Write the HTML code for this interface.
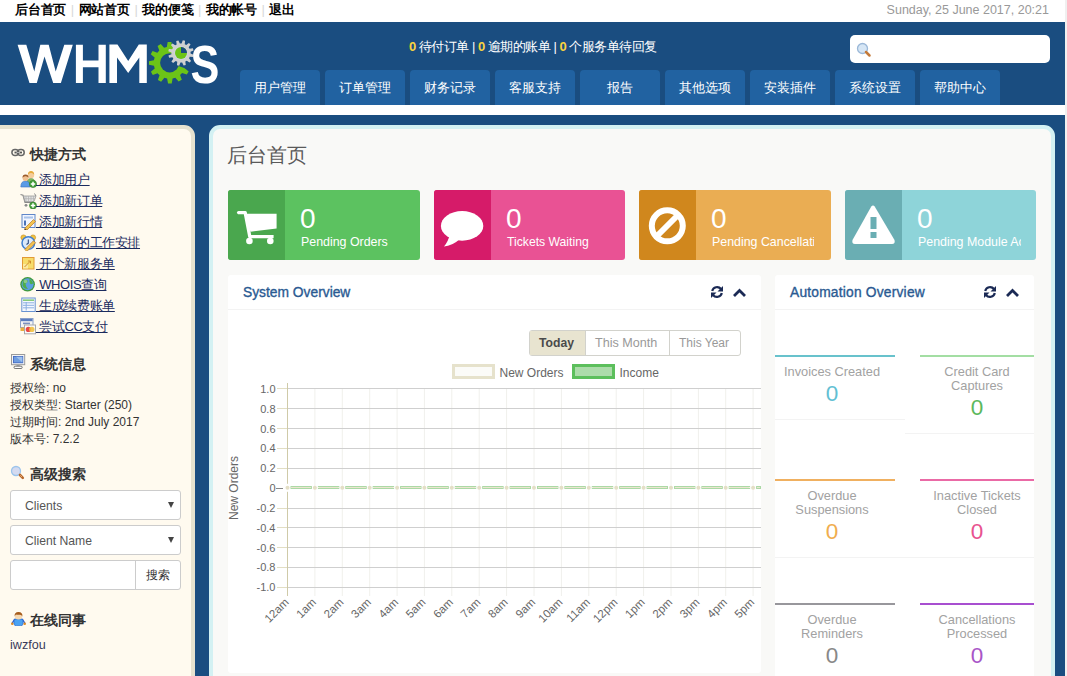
<!DOCTYPE html>
<html><head><meta charset="utf-8">
<style>
*{box-sizing:border-box}
html,body{margin:0;padding:0}
body{width:1067px;height:676px;overflow:hidden;position:relative;background:#f4f4f4;font-family:"Liberation Sans",sans-serif;color:#333}
.abs{position:absolute}
#topbar{left:0;top:0;width:1065px;height:22px;background:#fff}
#topnav{left:15px;top:1px;font-size:13px;font-weight:bold;color:#000;white-space:nowrap;line-height:18px;letter-spacing:-0.2px}
#topnav span.sep{color:#d8d8d8;font-weight:normal;margin:0 4.6px}
#date{right:18px;top:2px;font-size:12.5px;color:#999;line-height:16px}
#header{left:0;top:22px;width:1065px;height:83px;background:#1a4d80}
#strip{left:0;top:105px;width:1065px;height:10px;background:#fff}
#bodybg{left:0;top:115px;width:1065px;height:561px;background:#1a4d80}
#rstrip{left:1065px;top:0;width:2px;height:676px;background:#f0f0f0}
.tab{top:70px;width:80px;height:35px;background:#2162a1;border-radius:4px 4px 0 0;color:#fff;font-size:13px;text-align:center;line-height:35px}
#stats{left:409px;top:39px;font-size:13px;letter-spacing:-0.5px;color:#fff;white-space:nowrap;line-height:16px}
#stats b{color:#f9d33f}
#search{left:850px;top:35px;width:200px;height:28px;background:#fff;border-radius:5px}
#sidebar{left:-10px;top:125px;width:205px;height:600px;background:#fffaef;border:4px solid #e6e2cf;border-radius:0 11px 0 0}
#content{left:209px;top:125px;width:846px;height:600px;background:#f9f9f7;border:4px solid #d3f1f3;border-radius:11px 11px 0 0}
.sh{font-size:14px;font-weight:bold;color:#333;white-space:nowrap;line-height:16px}
.lnk{left:36px;font-size:13px;letter-spacing:-0.4px;color:#1a2b5e;white-space:nowrap;line-height:16px}
.lnk u{text-decoration:underline}
.info{left:10px;font-size:12px;color:#333;line-height:17px;white-space:nowrap}
.sel{left:10px;width:171px;height:30px;background:#fff;border:1px solid #ccc;border-radius:3px;font-size:12.2px;color:#555;line-height:30px;padding-left:14px}
.sel i{position:absolute;left:157px;top:11px;width:0;height:0;border-left:3px solid transparent;border-right:3px solid transparent;border-top:6px solid #444}
.box{top:190px;height:70px;width:192px;border-radius:3px;overflow:hidden}
.box .dk{position:absolute;left:0;top:0;width:57px;height:70px}
.box .num{position:absolute;left:72px;top:202px;font-size:28px;color:#fff;line-height:30px}
.box .lbl{position:absolute;left:73px;top:236px;font-size:12.3px;color:#fff;white-space:nowrap;line-height:14px}
.panel{background:#fff;border-radius:3px}
.ph{font-size:13.8px;font-weight:normal;color:#2a5a92;white-space:nowrap;line-height:16px;-webkit-text-stroke:0.35px #2a5a92}
.aline{height:2px}
.at{font-size:12.8px;color:#a2a2a2;text-align:center;line-height:14px;white-space:nowrap}
.an{font-size:22.5px;text-align:center;line-height:22px}
</style></head><body>
<div class="abs" id="topbar"></div>
<div class="abs" id="topnav">后台首页<span class="sep">|</span>网站首页<span class="sep">|</span>我的便笺<span class="sep">|</span>我的帐号<span class="sep">|</span>退出</div>
<div class="abs" id="date">Sunday, 25 June 2017, 20:21</div>
<div class="abs" id="header"></div>
<div class="abs" id="strip"></div>
<div class="abs" id="bodybg"></div>
<div class="abs" id="rstrip"></div>

<!-- logo -->
<svg class="abs" style="left:0;top:0" width="230" height="105" viewBox="0 0 230 105">
<polygon fill="#fff" points="17.6,44.8 26.3,44.8 34.3,71.5 40.3,44.8 48.7,44.8 55.7,71.5 64.3,44.8 72.8,44.8 60.9,82.9 53.2,82.9 44.5,56.5 36.8,82.9 29.5,82.9"/>
<path fill="#fff" d="M75.9,44.8h7v15.6h15.6v-15.6h7.3v38.1h-7.3v-15.6h-15.6v15.6h-7z"/>
<polygon fill="#fff" points="109.4,44.6 117.5,44.6 128.2,61 138.8,44.6 146.8,44.6 146.8,82.9 139.3,82.9 139.3,57.5 128.2,73 117,57.5 117,82.9 109.4,82.9"/>
<path fill="#6cc417" fill-rule="evenodd" d="M185.44,59.91 L190.40,60.76 L190.43,64.46 L185.49,65.41 L184.77,68.16 L188.65,71.39 L186.83,74.60 L182.07,72.95 L180.07,74.98 L181.81,79.71 L178.63,81.59 L175.34,77.77 L172.59,78.54 L171.74,83.50 L168.04,83.53 L167.09,78.59 L164.34,77.87 L161.11,81.75 L157.90,79.93 L159.55,75.17 L157.52,73.17 L152.79,74.91 L150.91,71.73 L154.73,68.44 L153.96,65.69 L149.00,64.84 L148.97,61.14 L153.91,60.19 L154.63,57.44 L150.75,54.21 L152.57,51.00 L157.33,52.65 L159.33,50.62 L157.59,45.89 L160.77,44.01 L164.06,47.83 L166.81,47.06 L167.66,42.10 L171.36,42.07 L172.31,47.01 L175.06,47.73 L178.29,43.85 L181.50,45.67 L179.85,50.43 L181.88,52.43 L186.61,50.69 L188.49,53.87 L184.67,57.16Z"/>
<circle cx="169.7" cy="62.8" r="9.6" fill="#1a4d80"/>
<path fill="#1a4d80" d="M169.7,62.8 L180.0,34.6 L199.7,57.8 L197.9,73.1 Z"/>
<path fill="#d0d0d0" fill-rule="evenodd" d="M190.58,53.56 L193.67,54.81 L193.15,57.03 L189.83,56.77 L189.02,58.27 L191.07,60.90 L189.51,62.56 L186.76,60.68 L185.31,61.58 L185.77,64.88 L183.59,65.54 L182.15,62.53 L180.44,62.58 L179.19,65.67 L176.97,65.15 L177.23,61.83 L175.73,61.02 L173.10,63.07 L171.44,61.51 L173.32,58.76 L172.42,57.31 L169.12,57.77 L168.46,55.59 L171.47,54.15 L171.42,52.44 L168.33,51.19 L168.85,48.97 L172.17,49.23 L172.98,47.73 L170.93,45.10 L172.49,43.44 L175.24,45.32 L176.69,44.42 L176.23,41.12 L178.41,40.46 L179.85,43.47 L181.56,43.42 L182.81,40.33 L185.03,40.85 L184.77,44.17 L186.27,44.98 L188.90,42.93 L190.56,44.49 L188.68,47.24 L189.58,48.69 L192.88,48.23 L193.54,50.41 L190.53,51.85Z"/>
<circle cx="181" cy="53" r="6.6" fill="#cfd6ea"/>
<circle cx="181" cy="53" r="6" fill="#6cc417"/>
<path fill="#1a4d80" d="M181,53 L181,47 A6,6 0 0 1 187,53 Z"/>
<text x="190.5" y="83.2" font-family="Liberation Sans" font-weight="bold" font-size="54" fill="#fff" transform="translate(190.5 0) scale(0.8 1) translate(-190.5 0)">S</text>
</svg>

<div class="abs" id="stats"><b>0</b> 待付订单 | <b>0</b> 逾期的账单 | <b>0</b> 个服务单待回复</div>
<div class="abs" id="search"></div>
<svg class="abs" style="left:856px;top:42px" width="16" height="16" viewBox="0 0 16 16">
<circle cx="6.5" cy="6.5" r="5" fill="#d6e6f5" stroke="#9bb8d8" stroke-width="1.3"/>
<line x1="10" y1="10" x2="13.5" y2="13.5" stroke="#c47a3a" stroke-width="2.5" stroke-linecap="round"/>
</svg>

<div class="abs tab" style="left:240px">用户管理</div>
<div class="abs tab" style="left:325px">订单管理</div>
<div class="abs tab" style="left:410px">财务记录</div>
<div class="abs tab" style="left:495px">客服支持</div>
<div class="abs tab" style="left:580px">报告</div>
<div class="abs tab" style="left:665px">其他选项</div>
<div class="abs tab" style="left:750px">安装插件</div>
<div class="abs tab" style="left:835px">系统设置</div>
<div class="abs tab" style="left:920px">帮助中心</div>

<!-- sidebar -->
<div class="abs" id="sidebar"></div>
<svg class="abs" style="left:11px;top:148px" width="15" height="9" viewBox="0 0 15 9">
<rect x="0.9" y="1.4" width="6.6" height="6.2" rx="3" fill="none" stroke="#666" stroke-width="1.5"/>
<rect x="6.6" y="1.4" width="6.6" height="6.2" rx="3" fill="none" stroke="#666" stroke-width="1.5"/>
<rect x="3.5" y="3.6" width="7.5" height="1.8" fill="#555"/>
<rect x="5.5" y="4.1" width="3.5" height="0.8" fill="#ccc"/>
</svg>
<div class="abs sh" style="left:30px;top:146px">快捷方式</div>

<svg class="abs" style="left:20px;top:170px" width="17" height="18" viewBox="0 0 17 18">
<path d="M6.5,15 Q6.5,8.5 11,8.5 Q15.5,8.5 15.5,15Z" fill="#7db862" stroke="#4f8a3a" stroke-width="0.6"/>
<circle cx="11" cy="5" r="3.2" fill="#f4cc9c"/><path d="M7.8,4.8 Q8,1 11,1 Q14.2,1 14.2,4.8 Q13,2.8 11,3 Q9,2.8 7.8,4.8Z" fill="#e5a93a"/>
<path d="M0.8,17 Q0.8,11 5.5,11 Q10.2,11 10.2,17Z" fill="#5a9be6" stroke="#3b72c0" stroke-width="0.6"/>
<circle cx="5.5" cy="8" r="3" fill="#f0c090"/><path d="M2.5,7.8 Q2.5,4.6 5.5,4.6 Q8.5,4.6 8.5,7.8 Q7.5,6 5.5,6.2 Q3.5,6 2.5,7.8Z" fill="#9a5a2a"/>
<circle cx="13" cy="14" r="3.6" fill="#44a03a" stroke="#2d7a28" stroke-width="0.6"/><path d="M13,11.8v4.4M10.8,14h4.4" stroke="#fff" stroke-width="1.5"/>
</svg>
<div class="abs lnk" style="top:172px"><u>&nbsp;添加用户</u></div>
<svg class="abs" style="left:20px;top:192px" width="17" height="17" viewBox="0 0 17 17">
<path d="M0.5,2.5 L3,3.2 L5,10.5 L13.5,10.5" fill="none" stroke="#8a8a8a" stroke-width="1.2"/>
<path d="M3.5,4 L16,4 L14,9.5 L5,9.5Z" fill="#e2e2e2" stroke="#9a9a9a" stroke-width="0.8"/>
<path d="M6,4v5.5M8.5,4v5.5M11,4v5.5M13.5,4v5.5M4.2,6.7h11" stroke="#b0b0b0" stroke-width="0.7"/>
<path d="M14.5,1.5 L16,4" stroke="#8a8a8a" stroke-width="1"/>
<circle cx="6" cy="13.3" r="1.4" fill="#8a8a8a"/>
<circle cx="13" cy="13.5" r="3.5" fill="#44a03a" stroke="#2d7a28" stroke-width="0.6"/><path d="M13,11.3v4.4M10.8,13.5h4.4" stroke="#fff" stroke-width="1.5"/>
</svg>
<div class="abs lnk" style="top:193px"><u>&nbsp;添加新订单</u></div>
<svg class="abs" style="left:20px;top:213px" width="17" height="17" viewBox="0 0 17 17">
<rect x="2" y="1.5" width="13" height="13" fill="#f0f5ff" stroke="#5f86c8" stroke-width="1"/>
<rect x="4" y="3.5" width="9" height="2" fill="#a8c2ea"/>
<rect x="4" y="7.5" width="2" height="5" fill="#4a72b8"/>
<path d="M6,16.5 L4.8,15.2 L13.5,6.5 L15.5,8.5 L6.8,17.2Z" fill="#f3c450" stroke="#b7782a" stroke-width="0.7"/>
<path d="M4.2,17 L4.8,15.2 L6.8,17.2Z" fill="#5a3a1a"/>
</svg>
<div class="abs lnk" style="top:214px"><u>&nbsp;添加新行情</u></div>
<svg class="abs" style="left:20px;top:234px" width="17" height="17" viewBox="0 0 17 17">
<circle cx="3.5" cy="3.5" r="2.6" fill="#f2c23c" stroke="#c08a20" stroke-width="0.6"/><circle cx="13" cy="3.5" r="2.6" fill="#f2c23c" stroke="#c08a20" stroke-width="0.6"/>
<circle cx="8.3" cy="9" r="6.3" fill="#dbe9fa" stroke="#3f7fd0" stroke-width="1.5"/>
<path d="M8.3,5.5V9.2L6.5,10.5" stroke="#2a4a80" stroke-width="1.1" fill="none"/>
<path d="M6,16.8 L4.8,15.5 L13.5,6.8 L15.5,8.8 L6.8,17.5Z" fill="#f3c450" stroke="#b7782a" stroke-width="0.7"/>
</svg>
<div class="abs lnk" style="top:235px"><u>&nbsp;创建新的工作安排</u></div>
<svg class="abs" style="left:20px;top:255px" width="17" height="17" viewBox="0 0 17 17">
<rect x="2.5" y="2.5" width="11.5" height="11.5" fill="#f7dc6a" stroke="#e29a35" stroke-width="1"/>
<path d="M3,13.5 L3,9 L8,9 L8,13.5Z" fill="#fbeaa0"/>
<path d="M4.5,12 L10.5,6 M8,6 L10.5,6 L10.5,8.5" stroke="#d08a2a" stroke-width="1" fill="none"/>
</svg>
<div class="abs lnk" style="top:256px"><u>&nbsp;开个新服务单</u></div>
<svg class="abs" style="left:20px;top:276px" width="17" height="17" viewBox="0 0 17 17">
<circle cx="7.6" cy="8.3" r="7.3" fill="#3f9a3a"/>
<circle cx="7.6" cy="8.3" r="6" fill="#5b9ee0"/>
<path d="M3,4.5 Q6,3 8,5 Q7,7 5.5,8 Q6,11 8,13 Q4,13 2.5,9.5Z" fill="#4fae4a"/>
<path d="M9.5,3 Q12.5,4 13,7.5 Q11,9 10,7.5 Q9,5.5 9.5,3Z" fill="#4fae4a"/>
<circle cx="5.5" cy="5.5" r="1.8" fill="#ffffff" opacity="0.35"/>
</svg>
<div class="abs lnk" style="top:277px"><u>&nbsp;WHOIS查询</u></div>
<svg class="abs" style="left:20px;top:297px" width="17" height="17" viewBox="0 0 17 17">
<rect x="1.8" y="1" width="13.4" height="13.5" fill="#f4f8fe" stroke="#6892d0" stroke-width="1"/>
<rect x="3" y="2.5" width="11" height="1.3" fill="#6cbf5c"/>
<path d="M3,5.8h11M3,8.3h11M3,10.8h11M6.2,5v8.5" stroke="#8cb0e2" stroke-width="1"/>
</svg>
<div class="abs lnk" style="top:298px"><u>&nbsp;生成续费账单</u></div>
<svg class="abs" style="left:20px;top:318px" width="17" height="17" viewBox="0 0 17 17">
<rect x="0.5" y="0.5" width="12.5" height="9" fill="#f4f4f4" stroke="#8aa0c8" stroke-width="1"/>
<rect x="1" y="1" width="11.5" height="2.2" fill="#5a7cc0"/>
<rect x="3" y="4.6" width="7" height="1.6" fill="#7a90c0"/>
<rect x="0.5" y="9.5" width="3.5" height="3.5" fill="#e8b040"/>
<rect x="4.5" y="7" width="11" height="8.8" fill="#fbfbfb" stroke="#a8a8a8" stroke-width="1"/>
<circle cx="8.4" cy="11.4" r="2.7" fill="#e84848"/><circle cx="11.8" cy="11.4" r="2.7" fill="#f2c040" opacity="0.9"/>
</svg>
<div class="abs lnk" style="top:319px"><u>&nbsp;尝试CC支付</u></div>

<svg class="abs" style="left:11px;top:354px" width="15" height="15" viewBox="0 0 15 15">
<rect x="0.5" y="0.5" width="13.2" height="10.2" fill="#f4f4f4" stroke="#9a9a9a" stroke-width="1"/>
<rect x="2" y="2" width="10.2" height="7.2" fill="#4468c0"/>
<rect x="2.8" y="2.8" width="8.6" height="5.6" fill="#6f9de0"/>
<path d="M5,2.8 L11.4,2.8 L11.4,8.4Z" fill="#9dc0ec"/>
<rect x="5.5" y="11" width="3.2" height="1.2" fill="#aaa"/>
<rect x="3" y="12.2" width="8.2" height="2.3" rx="1.1" fill="#fff" stroke="#555" stroke-width="0.8"/>
</svg>
<div class="abs sh" style="left:30px;top:356px">系统信息</div>
<div class="abs info" style="top:380px">授权给: no<br>授权类型: Starter (250)<br>过期时间: 2nd July 2017<br>版本号: 7.2.2</div>

<svg class="abs" style="left:10px;top:465px" width="15" height="15" viewBox="0 0 15 15">
<circle cx="6" cy="6" r="4.5" fill="#d4daf0" stroke="#9cc4ec" stroke-width="1.3"/>
<line x1="10" y1="10" x2="12.8" y2="12.8" stroke="#b8682a" stroke-width="2.6" stroke-linecap="round"/>
<line x1="10.3" y1="10.3" x2="12" y2="12" stroke="#f0c090" stroke-width="0.8"/>
</svg>
<div class="abs sh" style="left:30px;top:466px">高级搜索</div>
<div class="abs sel" style="top:490px">Clients<i></i></div>
<div class="abs sel" style="top:525px">Client Name<i></i></div>
<div class="abs" style="left:10px;top:560px;width:171px;height:30px;background:#fff;border:1px solid #ccc;border-radius:3px"></div>
<div class="abs" style="left:135px;top:560px;width:1px;height:30px;background:#ccc"></div>
<div class="abs" style="left:146px;top:567px;font-size:12px;color:#333;line-height:16px">搜索</div>

<svg class="abs" style="left:11px;top:611px" width="15" height="15" viewBox="0 0 15 15">
<path d="M1,12.5 L3.5,8.5 L11.5,8.5 L14,12.5" fill="none" stroke="#2a5ad0" stroke-width="1.4"/>
<circle cx="1.3" cy="12.8" r="1.3" fill="#e08a20"/><circle cx="13.7" cy="12.8" r="1.3" fill="#e08a20"/>
<path d="M3,10 Q3,8 5,8 L10,8 Q12,8 12,10 L12,12.5 Q12,14.8 9.5,14.8 L5.5,14.8 Q3,14.8 3,12.5Z" fill="#4aa2f2" stroke="#2a6ad0" stroke-width="0.7"/>
<ellipse cx="7.5" cy="5.3" rx="3.6" ry="3.2" fill="#f6d8b0"/>
<path d="M3.6,5.5 Q3.2,1 7.5,1 Q11.8,1 11.4,5.5 Q10.5,3.5 8.5,3.8 Q6,4 5,3.6 Q4,4.5 3.6,5.5Z" fill="#a65c1c"/>
</svg>
<div class="abs sh" style="left:30px;top:612px">在线同事</div>
<div class="abs info" style="top:637px;color:#3a3a5a;font-size:12.6px">iwzfou</div>

<!-- content -->
<div class="abs" id="content"></div>
<div class="abs" style="left:227px;top:142px;font-size:20px;color:#5a5a5a;line-height:26px">后台首页</div>

<div class="abs box" style="left:228px;background:#5cc260"><div class="dk" style="background:#4aa74e"></div></div>
<div class="abs box" style="left:434px;width:191px;background:#e95294"><div class="dk" style="background:#d61b69"></div></div>
<div class="abs box" style="left:639px;background:#eaad53"><div class="dk" style="background:#d0871d"></div></div>
<div class="abs box" style="left:845px;width:191px;background:#8ed4d9"><div class="dk" style="background:#6aaeb3"></div></div>

<svg class="abs" style="left:236px;top:209px" width="42" height="36" viewBox="0 0 42 36">
<path d="M2.5,3.6 L9.2,3.6 L13.8,27.6 L37.6,27.6" fill="none" stroke="#fff" stroke-width="3.3" stroke-linejoin="round"/>
<circle cx="2.6" cy="3.6" r="1.65" fill="#fff"/>
<path d="M8,4.7 L40.6,4.7 L40.6,19.5 L14.5,22.8 Z" fill="#fff"/>
<circle cx="13.4" cy="32" r="3.3" fill="#fff"/><circle cx="34.3" cy="32" r="3.3" fill="#fff"/>
</svg>
<svg class="abs" style="left:440px;top:210px" width="46" height="38" viewBox="0 0 46 38">
<ellipse cx="22.1" cy="15.9" rx="21.2" ry="14.8" fill="#fff"/>
<path d="M9.5,25 Q8.5,31 4,36.5 Q12,36 20,29Z" fill="#fff"/>
</svg>
<svg class="abs" style="left:648px;top:207px" width="39" height="38" viewBox="0 0 39 38">
<circle cx="19.3" cy="18.8" r="15.5" fill="none" stroke="#fff" stroke-width="6"/>
<line x1="9" y1="29" x2="29.5" y2="8.5" stroke="#fff" stroke-width="6"/>
</svg>
<svg class="abs" style="left:851px;top:204px" width="45" height="41" viewBox="0 0 45 41">
<path d="M20.3,2.5 Q22,0.5 23.7,2.5 L43.5,36 Q44.5,40 41,40 L4,40 Q0.5,40 1.5,36Z" fill="#fff"/>
<rect x="19.5" y="13" width="6" height="12" fill="#6aaeb3"/>
<rect x="19.5" y="28" width="6" height="6" fill="#6aaeb3"/>
</svg>

<div class="abs box" style="left:228px;background:transparent;overflow:visible"></div>
<div class="abs" style="left:300px;top:204px;font-size:28px;color:#fff;line-height:30px">0</div>
<div class="abs" style="left:301px;top:235px;font-size:12.4px;color:#fff;line-height:14px;white-space:nowrap">Pending Orders</div>
<div class="abs" style="left:506px;top:204px;font-size:28px;color:#fff;line-height:30px">0</div>
<div class="abs" style="left:507px;top:235px;font-size:12.2px;color:#fff;line-height:14px;white-space:nowrap">Tickets Waiting</div>
<div class="abs" style="left:711px;top:204px;font-size:28px;color:#fff;line-height:30px">0</div>
<div class="abs" style="left:712px;top:235px;width:102px;overflow:hidden;font-size:12.4px;color:#fff;line-height:14px;white-space:nowrap">Pending Cancellations</div>
<div class="abs" style="left:917px;top:204px;font-size:28px;color:#fff;line-height:30px">0</div>
<div class="abs" style="left:918px;top:235px;width:103px;overflow:hidden;font-size:12.4px;color:#fff;line-height:14px;white-space:nowrap">Pending Module Actions</div>

<!-- system overview panel -->
<div class="abs panel" style="left:228px;top:275px;width:533px;height:398px"></div>
<div class="abs" style="left:228px;top:309px;width:533px;height:1px;background:#f3f3f3"></div>
<div class="abs ph" style="left:243px;top:285px">System Overview</div>
<svg class="abs" style="left:710px;top:285px" width="14" height="14" viewBox="0 0 14 14">
<path d="M2.2,6 A5,5 0 0 1 11,4" fill="none" stroke="#1b2a55" stroke-width="2.2"/>
<path d="M13,1 L13,6.5 L7.5,6.5Z" fill="#1b2a55"/>
<path d="M11.8,8 A5,5 0 0 1 3,10" fill="none" stroke="#1b2a55" stroke-width="2.2"/>
<path d="M1,13 L1,7.5 L6.5,7.5Z" fill="#1b2a55"/>
</svg>
<svg class="abs" style="left:732px;top:287px" width="15" height="11" viewBox="0 0 15 11">
<path d="M2,9 L7.5,3.5 L13,9" fill="none" stroke="#1b2a55" stroke-width="2.8"/>
</svg>

<div class="abs" style="left:529px;top:330px;width:212px;height:26px;border:1px solid #d2d2cc;border-radius:3px;background:#fff"></div>
<div class="abs" style="left:530px;top:331px;width:55px;height:24px;background:#e8e4d0"></div>
<div class="abs" style="left:585px;top:331px;width:1px;height:24px;background:#d2d2cc"></div>
<div class="abs" style="left:669px;top:331px;width:1px;height:24px;background:#d2d2cc"></div>
<div class="abs" style="left:539px;top:335px;font-size:12.2px;font-weight:bold;color:#4a4a4a;line-height:16px">Today</div>
<div class="abs" style="left:595px;top:335px;font-size:12.6px;color:#999;line-height:16px">This Month</div>
<div class="abs" style="left:679px;top:335px;font-size:12px;color:#999;line-height:16px">This Year</div>

<svg class="abs" style="left:0;top:0" width="1067" height="676" viewBox="0 0 1067 676" font-family="Liberation Sans">
<rect x="453.5" y="365.5" width="40" height="12" fill="#fbfbf8" stroke="#e6e2cc" stroke-width="3"/>
<text x="499.5" y="377" font-size="12" fill="#666">New Orders</text>
<rect x="573.5" y="365.5" width="40" height="12" fill="#acdcaa" stroke="#5cbf5c" stroke-width="3"/>
<text x="619.5" y="377" font-size="12" fill="#666">Income</text>
<line x1="314.9" y1="388.5" x2="314.9" y2="596" stroke="#f0f0ec" stroke-width="1"/>
<line x1="342.3" y1="388.5" x2="342.3" y2="596" stroke="#f0f0ec" stroke-width="1"/>
<line x1="369.7" y1="388.5" x2="369.7" y2="596" stroke="#f0f0ec" stroke-width="1"/>
<line x1="397.1" y1="388.5" x2="397.1" y2="596" stroke="#f0f0ec" stroke-width="1"/>
<line x1="424.4" y1="388.5" x2="424.4" y2="596" stroke="#f0f0ec" stroke-width="1"/>
<line x1="451.8" y1="388.5" x2="451.8" y2="596" stroke="#f0f0ec" stroke-width="1"/>
<line x1="479.2" y1="388.5" x2="479.2" y2="596" stroke="#f0f0ec" stroke-width="1"/>
<line x1="506.6" y1="388.5" x2="506.6" y2="596" stroke="#f0f0ec" stroke-width="1"/>
<line x1="534.0" y1="388.5" x2="534.0" y2="596" stroke="#f0f0ec" stroke-width="1"/>
<line x1="561.4" y1="388.5" x2="561.4" y2="596" stroke="#f0f0ec" stroke-width="1"/>
<line x1="588.8" y1="388.5" x2="588.8" y2="596" stroke="#f0f0ec" stroke-width="1"/>
<line x1="616.2" y1="388.5" x2="616.2" y2="596" stroke="#f0f0ec" stroke-width="1"/>
<line x1="643.6" y1="388.5" x2="643.6" y2="596" stroke="#f0f0ec" stroke-width="1"/>
<line x1="671.0" y1="388.5" x2="671.0" y2="596" stroke="#f0f0ec" stroke-width="1"/>
<line x1="698.4" y1="388.5" x2="698.4" y2="596" stroke="#f0f0ec" stroke-width="1"/>
<line x1="725.7" y1="388.5" x2="725.7" y2="596" stroke="#f0f0ec" stroke-width="1"/>
<line x1="753.1" y1="388.5" x2="753.1" y2="596" stroke="#f0f0ec" stroke-width="1"/>
<line x1="287.5" y1="388.5" x2="761" y2="388.5" stroke="#cfcfcf" stroke-width="1"/>
<line x1="277" y1="388.5" x2="287.5" y2="388.5" stroke="#e2dec4" stroke-width="1"/>
<text x="275.5" y="392.8" text-anchor="end" font-size="11" fill="#666">1.0</text>
<line x1="287.5" y1="408.5" x2="761" y2="408.5" stroke="#cfcfcf" stroke-width="1"/>
<line x1="277" y1="408.5" x2="287.5" y2="408.5" stroke="#e2dec4" stroke-width="1"/>
<text x="275.5" y="412.7" text-anchor="end" font-size="11" fill="#666">0.8</text>
<line x1="287.5" y1="428.5" x2="761" y2="428.5" stroke="#cfcfcf" stroke-width="1"/>
<line x1="277" y1="428.5" x2="287.5" y2="428.5" stroke="#e2dec4" stroke-width="1"/>
<text x="275.5" y="432.5" text-anchor="end" font-size="11" fill="#666">0.6</text>
<line x1="287.5" y1="448.5" x2="761" y2="448.5" stroke="#cfcfcf" stroke-width="1"/>
<line x1="277" y1="448.5" x2="287.5" y2="448.5" stroke="#e2dec4" stroke-width="1"/>
<text x="275.5" y="452.4" text-anchor="end" font-size="11" fill="#666">0.4</text>
<line x1="287.5" y1="468.5" x2="761" y2="468.5" stroke="#cfcfcf" stroke-width="1"/>
<line x1="277" y1="468.5" x2="287.5" y2="468.5" stroke="#e2dec4" stroke-width="1"/>
<text x="275.5" y="472.2" text-anchor="end" font-size="11" fill="#666">0.2</text>
<line x1="276" y1="488.5" x2="283" y2="488.5" stroke="#888" stroke-width="1"/>
<text x="275.5" y="492.1" text-anchor="end" font-size="11" fill="#666">0</text>
<line x1="287.5" y1="508.5" x2="761" y2="508.5" stroke="#cfcfcf" stroke-width="1"/>
<line x1="277" y1="508.5" x2="287.5" y2="508.5" stroke="#e2dec4" stroke-width="1"/>
<text x="275.5" y="511.9" text-anchor="end" font-size="11" fill="#666">-0.2</text>
<line x1="287.5" y1="527.5" x2="761" y2="527.5" stroke="#cfcfcf" stroke-width="1"/>
<line x1="277" y1="527.5" x2="287.5" y2="527.5" stroke="#e2dec4" stroke-width="1"/>
<text x="275.5" y="531.8" text-anchor="end" font-size="11" fill="#666">-0.4</text>
<line x1="287.5" y1="547.5" x2="761" y2="547.5" stroke="#cfcfcf" stroke-width="1"/>
<line x1="277" y1="547.5" x2="287.5" y2="547.5" stroke="#e2dec4" stroke-width="1"/>
<text x="275.5" y="551.6" text-anchor="end" font-size="11" fill="#666">-0.6</text>
<line x1="287.5" y1="567.5" x2="761" y2="567.5" stroke="#cfcfcf" stroke-width="1"/>
<line x1="277" y1="567.5" x2="287.5" y2="567.5" stroke="#e2dec4" stroke-width="1"/>
<text x="275.5" y="571.4" text-anchor="end" font-size="11" fill="#666">-0.8</text>
<line x1="287.5" y1="587.5" x2="761" y2="587.5" stroke="#cfcfcf" stroke-width="1"/>
<line x1="277" y1="587.5" x2="287.5" y2="587.5" stroke="#e2dec4" stroke-width="1"/>
<text x="275.5" y="591.3" text-anchor="end" font-size="11" fill="#666">-1.0</text>
<line x1="287.5" y1="383" x2="287.5" y2="596" stroke="#cfcaa8" stroke-width="1"/>
<rect x="284.5" y="483.8" width="6" height="8" fill="#fff"/>
<rect x="291.0" y="486.5" width="20.4" height="2" fill="#ebe6cf" stroke="#acd9a6" stroke-width="1"/>
<circle cx="287.5" cy="487.8" r="2" fill="#e4dfc6"/>
<rect x="318.4" y="486.5" width="20.4" height="2" fill="#ebe6cf" stroke="#acd9a6" stroke-width="1"/>
<circle cx="314.9" cy="487.8" r="2" fill="#e4dfc6"/>
<rect x="345.8" y="486.5" width="20.4" height="2" fill="#ebe6cf" stroke="#acd9a6" stroke-width="1"/>
<circle cx="342.3" cy="487.8" r="2" fill="#e4dfc6"/>
<rect x="373.2" y="486.5" width="20.4" height="2" fill="#ebe6cf" stroke="#acd9a6" stroke-width="1"/>
<circle cx="369.7" cy="487.8" r="2" fill="#e4dfc6"/>
<rect x="400.6" y="486.5" width="20.4" height="2" fill="#ebe6cf" stroke="#acd9a6" stroke-width="1"/>
<circle cx="397.1" cy="487.8" r="2" fill="#e4dfc6"/>
<rect x="427.9" y="486.5" width="20.4" height="2" fill="#ebe6cf" stroke="#acd9a6" stroke-width="1"/>
<circle cx="424.4" cy="487.8" r="2" fill="#e4dfc6"/>
<rect x="455.3" y="486.5" width="20.4" height="2" fill="#ebe6cf" stroke="#acd9a6" stroke-width="1"/>
<circle cx="451.8" cy="487.8" r="2" fill="#e4dfc6"/>
<rect x="482.7" y="486.5" width="20.4" height="2" fill="#ebe6cf" stroke="#acd9a6" stroke-width="1"/>
<circle cx="479.2" cy="487.8" r="2" fill="#e4dfc6"/>
<rect x="510.1" y="486.5" width="20.4" height="2" fill="#ebe6cf" stroke="#acd9a6" stroke-width="1"/>
<circle cx="506.6" cy="487.8" r="2" fill="#e4dfc6"/>
<rect x="537.5" y="486.5" width="20.4" height="2" fill="#ebe6cf" stroke="#acd9a6" stroke-width="1"/>
<circle cx="534.0" cy="487.8" r="2" fill="#e4dfc6"/>
<rect x="564.9" y="486.5" width="20.4" height="2" fill="#ebe6cf" stroke="#acd9a6" stroke-width="1"/>
<circle cx="561.4" cy="487.8" r="2" fill="#e4dfc6"/>
<rect x="592.3" y="486.5" width="20.4" height="2" fill="#ebe6cf" stroke="#acd9a6" stroke-width="1"/>
<circle cx="588.8" cy="487.8" r="2" fill="#e4dfc6"/>
<rect x="619.7" y="486.5" width="20.4" height="2" fill="#ebe6cf" stroke="#acd9a6" stroke-width="1"/>
<circle cx="616.2" cy="487.8" r="2" fill="#e4dfc6"/>
<rect x="647.1" y="486.5" width="20.4" height="2" fill="#ebe6cf" stroke="#acd9a6" stroke-width="1"/>
<circle cx="643.6" cy="487.8" r="2" fill="#e4dfc6"/>
<rect x="674.5" y="486.5" width="20.4" height="2" fill="#ebe6cf" stroke="#acd9a6" stroke-width="1"/>
<circle cx="671.0" cy="487.8" r="2" fill="#e4dfc6"/>
<rect x="701.9" y="486.5" width="20.4" height="2" fill="#ebe6cf" stroke="#acd9a6" stroke-width="1"/>
<circle cx="698.4" cy="487.8" r="2" fill="#e4dfc6"/>
<rect x="729.2" y="486.5" width="20.4" height="2" fill="#ebe6cf" stroke="#acd9a6" stroke-width="1"/>
<circle cx="725.7" cy="487.8" r="2" fill="#e4dfc6"/>
<rect x="756.6" y="486.5" width="3.9" height="2" fill="#ebe6cf" stroke="#acd9a6" stroke-width="1"/>
<circle cx="753.1" cy="487.8" r="2" fill="#e4dfc6"/>
<text x="289.5" y="603" text-anchor="end" font-size="11.5" fill="#666" transform="rotate(-45 289.5 603)">12am</text>
<text x="316.9" y="603" text-anchor="end" font-size="11.5" fill="#666" transform="rotate(-45 316.9 603)">1am</text>
<text x="344.3" y="603" text-anchor="end" font-size="11.5" fill="#666" transform="rotate(-45 344.3 603)">2am</text>
<text x="371.7" y="603" text-anchor="end" font-size="11.5" fill="#666" transform="rotate(-45 371.7 603)">3am</text>
<text x="399.1" y="603" text-anchor="end" font-size="11.5" fill="#666" transform="rotate(-45 399.1 603)">4am</text>
<text x="426.4" y="603" text-anchor="end" font-size="11.5" fill="#666" transform="rotate(-45 426.4 603)">5am</text>
<text x="453.8" y="603" text-anchor="end" font-size="11.5" fill="#666" transform="rotate(-45 453.8 603)">6am</text>
<text x="481.2" y="603" text-anchor="end" font-size="11.5" fill="#666" transform="rotate(-45 481.2 603)">7am</text>
<text x="508.6" y="603" text-anchor="end" font-size="11.5" fill="#666" transform="rotate(-45 508.6 603)">8am</text>
<text x="536.0" y="603" text-anchor="end" font-size="11.5" fill="#666" transform="rotate(-45 536.0 603)">9am</text>
<text x="563.4" y="603" text-anchor="end" font-size="11.5" fill="#666" transform="rotate(-45 563.4 603)">10am</text>
<text x="590.8" y="603" text-anchor="end" font-size="11.5" fill="#666" transform="rotate(-45 590.8 603)">11am</text>
<text x="618.2" y="603" text-anchor="end" font-size="11.5" fill="#666" transform="rotate(-45 618.2 603)">12pm</text>
<text x="645.6" y="603" text-anchor="end" font-size="11.5" fill="#666" transform="rotate(-45 645.6 603)">1pm</text>
<text x="673.0" y="603" text-anchor="end" font-size="11.5" fill="#666" transform="rotate(-45 673.0 603)">2pm</text>
<text x="700.4" y="603" text-anchor="end" font-size="11.5" fill="#666" transform="rotate(-45 700.4 603)">3pm</text>
<text x="727.7" y="603" text-anchor="end" font-size="11.5" fill="#666" transform="rotate(-45 727.7 603)">4pm</text>
<text x="755.1" y="603" text-anchor="end" font-size="11.5" fill="#666" transform="rotate(-45 755.1 603)">5pm</text>
<text x="238" y="488" text-anchor="middle" font-size="12" fill="#666" transform="rotate(-90 238 488)">New Orders</text>
</svg>

<!-- automation panel -->
<div class="abs panel" style="left:775px;top:275px;width:259px;height:410px"></div>
<div class="abs" style="left:775px;top:309px;width:259px;height:1px;background:#f3f3f3"></div>
<div class="abs ph" style="left:790px;top:285px;letter-spacing:0.2px">Automation Overview</div>
<svg class="abs" style="left:983px;top:285px" width="14" height="14" viewBox="0 0 14 14">
<path d="M2.2,6 A5,5 0 0 1 11,4" fill="none" stroke="#1b2a55" stroke-width="2.2"/>
<path d="M13,1 L13,6.5 L7.5,6.5Z" fill="#1b2a55"/>
<path d="M11.8,8 A5,5 0 0 1 3,10" fill="none" stroke="#1b2a55" stroke-width="2.2"/>
<path d="M1,13 L1,7.5 L6.5,7.5Z" fill="#1b2a55"/>
</svg>
<svg class="abs" style="left:1005px;top:287px" width="15" height="11" viewBox="0 0 15 11">
<path d="M2,9 L7.5,3.5 L13,9" fill="none" stroke="#1b2a55" stroke-width="2.8"/>
</svg>

<div class="abs aline" style="left:775px;top:355px;width:120px;background:#68c2cc"></div>
<div class="abs aline" style="left:920px;top:355px;width:114px;background:#a3dea3"></div>
<div class="abs at" style="left:772px;top:365px;width:120px">Invoices Created</div>
<div class="abs an" style="left:772px;top:383px;width:120px;color:#62bfd3">0</div>
<div class="abs at" style="left:920px;top:365px;width:114px">Credit Card<br>Captures</div>
<div class="abs an" style="left:920px;top:397px;width:114px;color:#5cb85c">0</div>
<div class="abs" style="left:775px;top:419px;width:130px;height:1px;background:#f3f3f3"></div>
<div class="abs" style="left:905px;top:433px;width:129px;height:1px;background:#f3f3f3"></div>

<div class="abs aline" style="left:775px;top:479px;width:120px;background:#f0b060"></div>
<div class="abs aline" style="left:920px;top:479px;width:114px;background:#ea6aa6"></div>
<div class="abs at" style="left:772px;top:489px;width:120px">Overdue<br>Suspensions</div>
<div class="abs an" style="left:772px;top:521px;width:120px;color:#f0ad4e">0</div>
<div class="abs at" style="left:920px;top:489px;width:114px">Inactive Tickets<br>Closed</div>
<div class="abs an" style="left:920px;top:521px;width:114px;color:#e8528f"></div>
<div class="abs an" style="left:920px;top:521px;width:114px;color:#e8528f">0</div>
<div class="abs" style="left:775px;top:557px;width:259px;height:1px;background:#f3f3f3"></div>

<div class="abs aline" style="left:775px;top:603px;width:120px;background:#98979c"></div>
<div class="abs aline" style="left:920px;top:603px;width:114px;background:#a84fd0"></div>
<div class="abs at" style="left:772px;top:613px;width:120px">Overdue<br>Reminders</div>
<div class="abs an" style="left:772px;top:645px;width:120px;color:#888">0</div>
<div class="abs at" style="left:920px;top:613px;width:114px">Cancellations<br>Processed</div>
<div class="abs an" style="left:920px;top:645px;width:114px;color:#a855c8">0</div>
</body></html>
